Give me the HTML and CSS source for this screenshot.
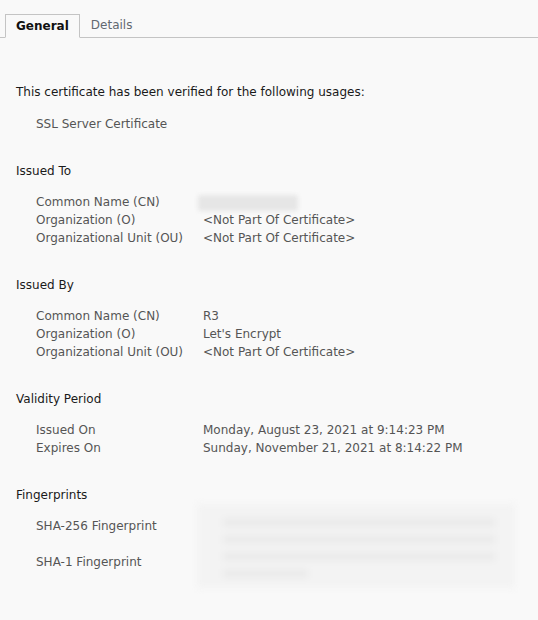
FILE: index.html
```html
<!DOCTYPE html>
<html lang="en">
<head>
  <meta charset="UTF-8" />
  <title>Certificate Viewer</title>
  <link rel="stylesheet" href="styles.css">
</head>
<body>
  <div class="tabs">
    <div class="tab active">General</div>
    <div class="tab">Details</div>
  </div>

  <div class="content">
    <p class="intro">This certificate has been verified for the following usages:</p>
    <div class="usage">SSL Server Certificate</div>

    <div class="section">
      <h3>Issued To</h3>
      <div class="row"><span class="label">Common Name (CN)</span><span class="value"><span class="blur blur-cn"></span></span></div>
      <div class="row"><span class="label">Organization (O)</span><span class="value">&lt;Not Part Of Certificate&gt;</span></div>
      <div class="row"><span class="label">Organizational Unit (OU)</span><span class="value">&lt;Not Part Of Certificate&gt;</span></div>
    </div>

    <div class="section">
      <h3>Issued By</h3>
      <div class="row"><span class="label">Common Name (CN)</span><span class="value">R3</span></div>
      <div class="row"><span class="label">Organization (O)</span><span class="value">Let's Encrypt</span></div>
      <div class="row"><span class="label">Organizational Unit (OU)</span><span class="value">&lt;Not Part Of Certificate&gt;</span></div>
    </div>

    <div class="section">
      <h3>Validity Period</h3>
      <div class="row"><span class="label">Issued On</span><span class="value">Monday, August 23, 2021 at 9:14:23 PM</span></div>
      <div class="row"><span class="label">Expires On</span><span class="value">Sunday, November 21, 2021 at 8:14:22 PM</span></div>
    </div>

    <div class="section fingerprints">
      <h3>Fingerprints</h3>
      <div class="fp-grid">
        <div class="fp-labels">
          <div class="fp-label">SHA-256 Fingerprint</div>
          <div class="fp-label">SHA-1 Fingerprint</div>
        </div>
        <div class="fp-blur">
          <div class="fp-line"></div>
          <div class="fp-line"></div>
          <div class="fp-line"></div>
          <div class="fp-line short"></div>
        </div>
      </div>
    </div>
  </div>
</body>
</html>
```

FILE: styles.css
```css
* {
  margin: 0;
  padding: 0;
  box-sizing: border-box;
}
html, body {
  height: 100%;
}
body {
  font-family: "DejaVu Sans", sans-serif;
  font-size: 12px;
  background: #f9f9f9;
  color: #1a1a1a;
  overflow: hidden;
}
.tabs {
  display: flex;
  padding: 14px 0 0 5px;
  border-bottom: 1px solid #c4c4c4;
}
.tab {
  padding: 0 11px;
  height: 24px;
  line-height: 23px;
  color: #626870;
  margin-bottom: -1px;
}
.tab.active {
  font-weight: bold;
  color: #111;
  background: #f9f9f9;
  border: 1px solid #c4c4c4;
  border-bottom: 1px solid #f9f9f9;
  padding: 0 10px;
}
.content {
  padding: 45px 16px 0 16px;
}
.intro {
  line-height: 18px;
}
.usage {
  color: #555;
  padding-left: 20px;
  margin-top: 14px;
  line-height: 18px;
}
.section {
  margin-top: 29px;
}
.section h3 {
  font-size: 12px;
  font-weight: normal;
  line-height: 18px;
  margin-bottom: 13px;
}
.row {
  display: flex;
  line-height: 18px;
  color: #555;
  padding-left: 20px;
}
.label {
  width: 167px;
  flex-shrink: 0;
}
.value {
  position: relative;
}
.blur {
  display: inline-block;
  vertical-align: middle;
  background: #e6e6e6;
  filter: blur(2px);
  border-radius: 3px;
}
.blur-cn {
  width: 100px;
  height: 16px;
  margin-left: -5px;
}
.fp-grid {
  display: flex;
  padding-left: 20px;
  margin-top: -13px;
}
.fp-labels {
  width: 161px;
  flex-shrink: 0;
  color: #555;
  padding-top: 13px;
}
.fp-label {
  line-height: 18px;
  height: 36px;
}
.fp-blur {
  width: 318px;
  height: 84px;
  background: #f3f3f3;
  filter: blur(3px);
  padding: 14px 20px 0 26px;
  display: flex;
  flex-direction: column;
  gap: 8px;
}
.fp-line {
  height: 9px;
  background: #ebebeb;
}
.fp-line.short {
  width: 85px;
}
```
